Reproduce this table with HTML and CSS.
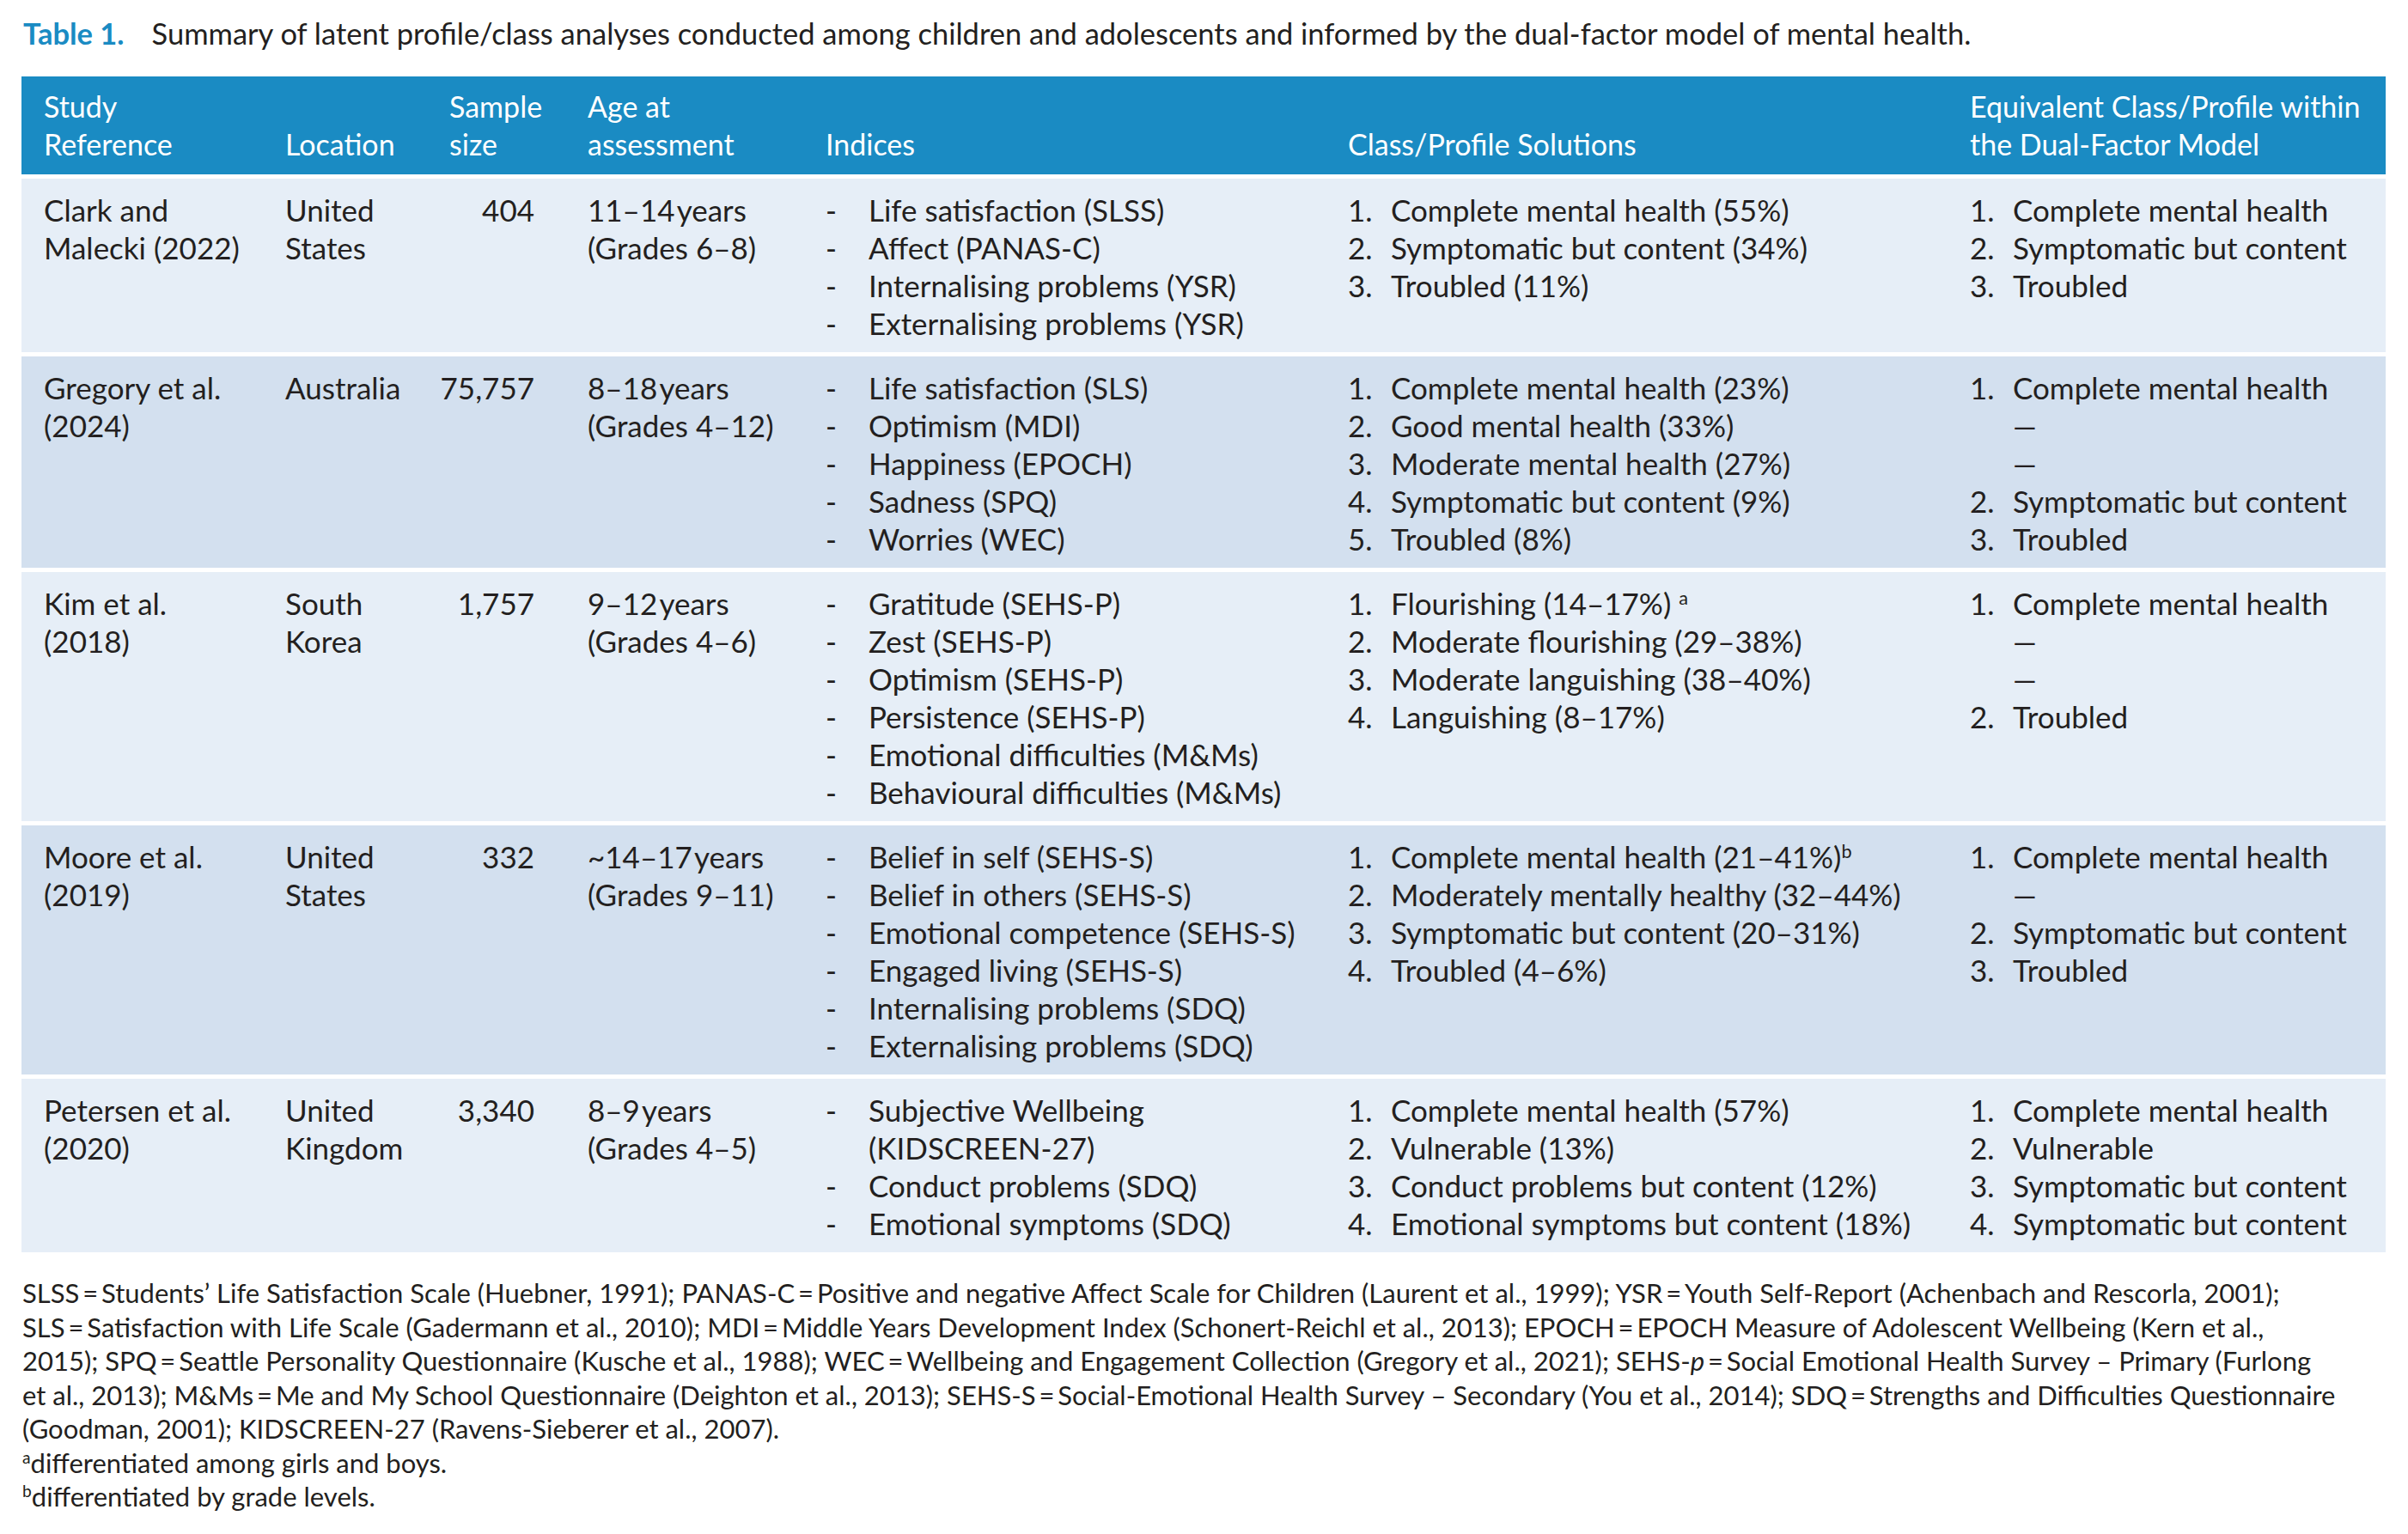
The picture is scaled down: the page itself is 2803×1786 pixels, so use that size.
FILE: index.html
```html
<!DOCTYPE html>
<html lang="en">
<head>
<meta charset="utf-8">
<title>Table 1</title>
<link rel="stylesheet" href="styles.css">
</head>
<body>
<p class="caption"><span class="label">Table 1.</span>Summary of latent profile/class analyses conducted among children and adolescents and informed by the dual-factor model of mental health.</p>
<table class="summary">
  <colgroup>
    <col class="c-ref"><col class="c-loc"><col class="c-size"><col class="c-age"><col class="c-ind"><col class="c-sol"><col class="c-eq">
  </colgroup>
  <thead>
    <tr>
      <th class="ref">Study<br>Reference</th>
      <th>Location</th>
      <th>Sample<br>size</th>
      <th>Age at<br>assessment</th>
      <th>Indices</th>
      <th>Class/Profile Solutions</th>
      <th>Equivalent Class/Profile within<br>the Dual-Factor Model</th>
    </tr>
  </thead>
  <tbody>
    <tr class="light">
      <td class="ref">Clark and<br>Malecki (2022)</td>
      <td>United<br>States</td>
      <td class="num"><span>404</span></td>
      <td>11–14&#8202;years<br>(Grades 6–8)</td>
      <td>
        <ul class="dash">
          <li><span class="mk">-</span><span>Life satisfaction (SLSS)</span></li>
          <li><span class="mk">-</span><span>Affect (PANAS-C)</span></li>
          <li><span class="mk">-</span><span>Internalising problems (YSR)</span></li>
          <li><span class="mk">-</span><span>Externalising problems (YSR)</span></li>
        </ul>
      </td>
      <td>
        <ol class="nums">
          <li><span class="mk">1.</span><span>Complete mental health (55%)</span></li>
          <li><span class="mk">2.</span><span>Symptomatic but content (34%)</span></li>
          <li><span class="mk">3.</span><span>Troubled (11%)</span></li>
        </ol>
      </td>
      <td>
        <ol class="nums">
          <li><span class="mk">1.</span><span>Complete mental health</span></li>
          <li><span class="mk">2.</span><span>Symptomatic but content</span></li>
          <li><span class="mk">3.</span><span>Troubled</span></li>
        </ol>
      </td>
    </tr>
    <tr class="dark">
      <td class="ref">Gregory et al.<br>(2024)</td>
      <td>Australia</td>
      <td class="num"><span>75,757</span></td>
      <td>8–18&#8202;years<br>(Grades 4–12)</td>
      <td>
        <ul class="dash">
          <li><span class="mk">-</span><span>Life satisfaction (SLS)</span></li>
          <li><span class="mk">-</span><span>Optimism (MDI)</span></li>
          <li><span class="mk">-</span><span>Happiness (EPOCH)</span></li>
          <li><span class="mk">-</span><span>Sadness (SPQ)</span></li>
          <li><span class="mk">-</span><span>Worries (WEC)</span></li>
        </ul>
      </td>
      <td>
        <ol class="nums">
          <li><span class="mk">1.</span><span>Complete mental health (23%)</span></li>
          <li><span class="mk">2.</span><span>Good mental health (33%)</span></li>
          <li><span class="mk">3.</span><span>Moderate mental health (27%)</span></li>
          <li><span class="mk">4.</span><span>Symptomatic but content (9%)</span></li>
          <li><span class="mk">5.</span><span>Troubled (8%)</span></li>
        </ol>
      </td>
      <td>
        <ol class="nums">
          <li><span class="mk">1.</span><span>Complete mental health</span></li>
          <li><span class="mk"></span><span>—</span></li>
          <li><span class="mk"></span><span>—</span></li>
          <li><span class="mk">2.</span><span>Symptomatic but content</span></li>
          <li><span class="mk">3.</span><span>Troubled</span></li>
        </ol>
      </td>
    </tr>
    <tr class="light">
      <td class="ref">Kim et al.<br>(2018)</td>
      <td>South<br>Korea</td>
      <td class="num"><span>1,757</span></td>
      <td>9–12&#8202;years<br>(Grades 4–6)</td>
      <td>
        <ul class="dash">
          <li><span class="mk">-</span><span>Gratitude (SEHS-P)</span></li>
          <li><span class="mk">-</span><span>Zest (SEHS-P)</span></li>
          <li><span class="mk">-</span><span>Optimism (SEHS-P)</span></li>
          <li><span class="mk">-</span><span>Persistence (SEHS-P)</span></li>
          <li><span class="mk">-</span><span>Emotional difficulties (M&amp;Ms)</span></li>
          <li><span class="mk">-</span><span>Behavioural difficulties (M&amp;Ms)</span></li>
        </ul>
      </td>
      <td>
        <ol class="nums">
          <li><span class="mk">1.</span><span>Flourishing (14–17%) <sup>a</sup></span></li>
          <li><span class="mk">2.</span><span>Moderate flourishing (29–38%)</span></li>
          <li><span class="mk">3.</span><span>Moderate languishing (38–40%)</span></li>
          <li><span class="mk">4.</span><span>Languishing (8–17%)</span></li>
        </ol>
      </td>
      <td>
        <ol class="nums">
          <li><span class="mk">1.</span><span>Complete mental health</span></li>
          <li><span class="mk"></span><span>—</span></li>
          <li><span class="mk"></span><span>—</span></li>
          <li><span class="mk">2.</span><span>Troubled</span></li>
        </ol>
      </td>
    </tr>
    <tr class="dark">
      <td class="ref">Moore et al.<br>(2019)</td>
      <td>United<br>States</td>
      <td class="num"><span>332</span></td>
      <td>~14–17&#8202;years<br>(Grades 9–11)</td>
      <td>
        <ul class="dash">
          <li><span class="mk">-</span><span>Belief in self (SEHS-S)</span></li>
          <li><span class="mk">-</span><span>Belief in others (SEHS-S)</span></li>
          <li><span class="mk">-</span><span>Emotional competence (SEHS-S)</span></li>
          <li><span class="mk">-</span><span>Engaged living (SEHS-S)</span></li>
          <li><span class="mk">-</span><span>Internalising problems (SDQ)</span></li>
          <li><span class="mk">-</span><span>Externalising problems (SDQ)</span></li>
        </ul>
      </td>
      <td>
        <ol class="nums">
          <li><span class="mk">1.</span><span>Complete mental health (21–41%)<sup>b</sup></span></li>
          <li><span class="mk">2.</span><span>Moderately mentally healthy (32–44%)</span></li>
          <li><span class="mk">3.</span><span>Symptomatic but content (20–31%)</span></li>
          <li><span class="mk">4.</span><span>Troubled (4–6%)</span></li>
        </ol>
      </td>
      <td>
        <ol class="nums">
          <li><span class="mk">1.</span><span>Complete mental health</span></li>
          <li><span class="mk"></span><span>—</span></li>
          <li><span class="mk">2.</span><span>Symptomatic but content</span></li>
          <li><span class="mk">3.</span><span>Troubled</span></li>
        </ol>
      </td>
    </tr>
    <tr class="light">
      <td class="ref">Petersen et al.<br>(2020)</td>
      <td>United<br>Kingdom</td>
      <td class="num"><span>3,340</span></td>
      <td>8–9&#8202;years<br>(Grades 4–5)</td>
      <td>
        <ul class="dash">
          <li><span class="mk">-</span><span>Subjective Wellbeing<br>(KIDSCREEN-27)</span></li>
          <li><span class="mk">-</span><span>Conduct problems (SDQ)</span></li>
          <li><span class="mk">-</span><span>Emotional symptoms (SDQ)</span></li>
        </ul>
      </td>
      <td>
        <ol class="nums">
          <li><span class="mk">1.</span><span>Complete mental health (57%)</span></li>
          <li><span class="mk">2.</span><span>Vulnerable (13%)</span></li>
          <li><span class="mk">3.</span><span>Conduct problems but content (12%)</span></li>
          <li><span class="mk">4.</span><span>Emotional symptoms but content (18%)</span></li>
        </ol>
      </td>
      <td>
        <ol class="nums">
          <li><span class="mk">1.</span><span>Complete mental health</span></li>
          <li><span class="mk">2.</span><span>Vulnerable</span></li>
          <li><span class="mk">3.</span><span>Symptomatic but content</span></li>
          <li><span class="mk">4.</span><span>Symptomatic but content</span></li>
        </ol>
      </td>
    </tr>
  </tbody>
</table>
<div class="notes">
  <p>SLSS&#8201;=&#8201;Students’ Life Satisfaction Scale (Huebner, 1991); PANAS-C&#8201;=&#8201;Positive and negative Affect Scale for Children (Laurent et al., 1999); YSR&#8201;=&#8201;Youth Self-Report (Achenbach and Rescorla, 2001);<br>SLS&#8201;=&#8201;Satisfaction with Life Scale (Gadermann et al., 2010); MDI&#8201;=&#8201;Middle Years Development Index (Schonert-Reichl et al., 2013); EPOCH&#8201;=&#8201;EPOCH Measure of Adolescent Wellbeing (Kern et al.,<br>2015); SPQ&#8201;=&#8201;Seattle Personality Questionnaire (Kusche et al., 1988); WEC&#8201;=&#8201;Wellbeing and Engagement Collection (Gregory et al., 2021); SEHS-<i>p</i>&#8201;=&#8201;Social Emotional Health Survey – Primary (Furlong<br>et al., 2013); M&amp;Ms&#8201;=&#8201;Me and My School Questionnaire (Deighton et al., 2013); SEHS-S&#8201;=&#8201;Social-Emotional Health Survey – Secondary (You et al., 2014); SDQ&#8201;=&#8201;Strengths and Difficulties Questionnaire<br>(Goodman, 2001); KIDSCREEN-27 (Ravens-Sieberer et al., 2007).</p>
  <p><sup>a</sup>differentiated among girls and boys.</p>
  <p><sup>b</sup>differentiated by grade levels.</p>
</div>
</body>
</html>
```

FILE: styles.css
```css
html, body {
  margin: 0;
  padding: 0;
  background: #ffffff;
}

body {
  padding: 19px 26px 0 25px;
  font-family: Lato, "Open Sans", "Liberation Sans", sans-serif;
  color: #231f20;
}

.caption {
  margin: 0;
  font-size: 34.5px;
  line-height: 40px;
  padding-left: 2px;
  white-space: nowrap;
}

.caption .label {
  color: #1a8bc3;
  font-weight: 700;
  margin-right: 32px;
}

.summary {
  margin-top: 25px;
  width: 2752px;
  table-layout: fixed;
  border-collapse: separate;
  border-spacing: 0 5px;
  font-size: 35px;
  line-height: 44px;
}

.c-ref { width: 307px; }
.c-loc { width: 191px; }
.c-size { width: 161px; }
.c-age { width: 277px; }
.c-ind { width: 608px; }
.c-sol { width: 724px; }
.c-eq { width: 484px; }

.summary th {
  background: #1a8bc3;
  color: #ffffff;
  font-size: 34px;
  font-weight: 400;
  text-align: left;
  vertical-align: bottom;
  padding: 13px 0 13px 0;
  white-space: nowrap;
}

.summary td {
  vertical-align: top;
  padding: 14px 0 12px 0;
  text-align: left;
}

.summary .ref {
  padding-left: 26px;
}

.summary td.num {
  padding-right: 62px;
}

.summary td.num span {
  display: block;
  margin-left: -30px;
  text-align: right;
  white-space: nowrap;
}

.light td { background: #e6eef7; }
.dark td { background: #d3e0ef; }

.dash, .nums {
  list-style: none;
  margin: 0;
  padding: 0;
}

.dash li, .nums li {
  display: flex;
}

.dash .mk, .nums .mk {
  flex: 0 0 50px;
}

sup {
  font-size: 0.62em;
  line-height: 0;
  vertical-align: 0.55em;
}

.notes {
  margin-top: 23px;
  font-size: 31px;
  line-height: 39.5px;
  padding-left: 1px;
}

.notes p {
  margin: 0;
  white-space: nowrap;
}
```
